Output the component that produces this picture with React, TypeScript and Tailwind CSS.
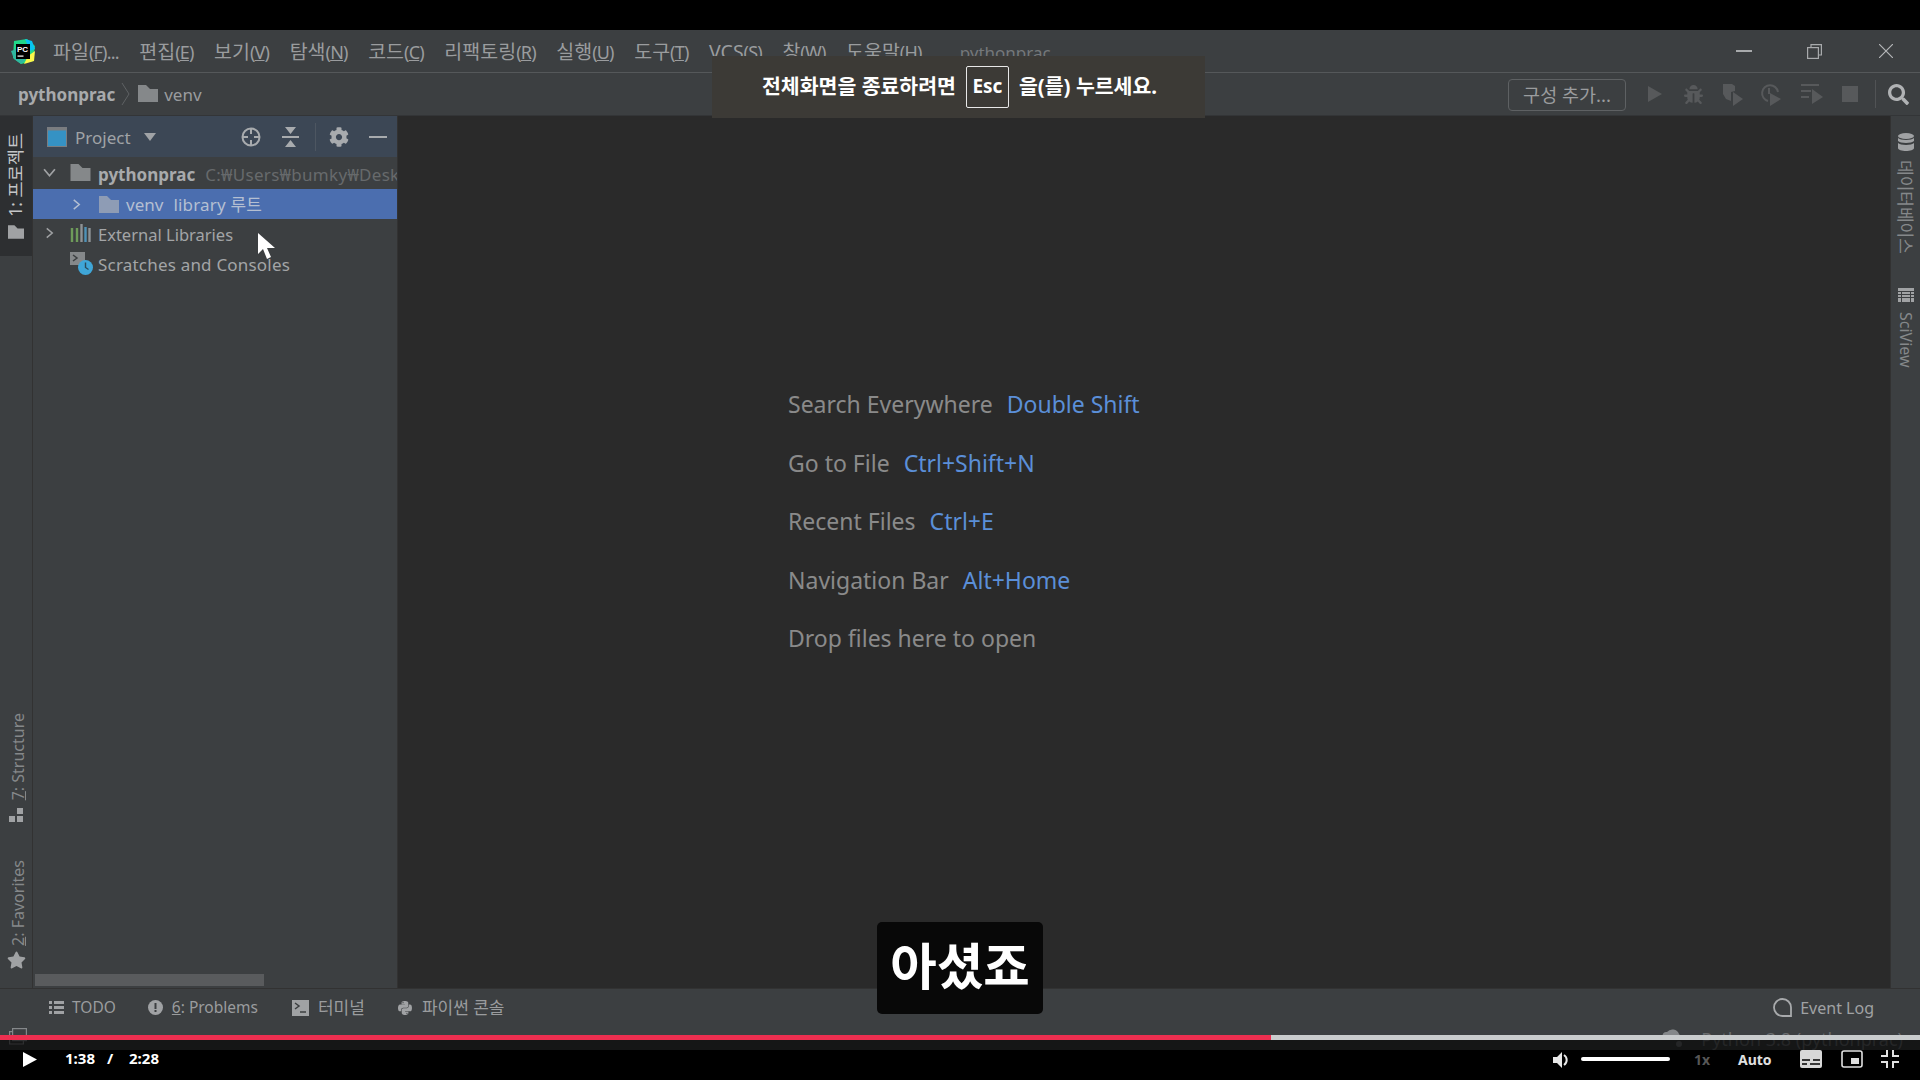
import { FaBug, FaCog, FaPython, FaSearch, FaStar } from 'react-icons/fa';

const menus = [
  ['파일', 'F', '...'],
  ['편집', 'E', ''],
  ['보기', 'V', ''],
  ['탐색', 'N', ''],
  ['코드', 'C', ''],
  ['리팩토링', 'R', ''],
  ['실행', 'U', ''],
  ['도구', 'T', ''],
  ['VCS', 'S', ''],
  ['창', 'W', ''],
  ['도움말', 'H', ''],
];

const hints = [
  ['Search Everywhere', 'Double Shift'],
  ['Go to File', 'Ctrl+Shift+N'],
  ['Recent Files', 'Ctrl+E'],
  ['Navigation Bar', 'Alt+Home'],
  ['Drop files here to open', ''],
];

function Folder({ className }: { className: string }) {
  return (
    <svg viewBox="0 0 20 17" className={className} fill="currentColor">
      <path d="M0 0h8l4 4h8v13H0z" />
    </svg>
  );
}

function Chevron({ down, className }: { down?: boolean; className: string }) {
  return (
    <svg viewBox="0 0 12 12" className={className} fill="none" stroke="currentColor" strokeWidth="1.6">
      <path d={down ? 'M1 3l5 6 5-6' : 'M3 1l6 5-6 5'} />
    </svg>
  );
}

function Logo() {
  return (
    <svg viewBox="0 0 24 25" className="w-[24px] h-[25px]">
      <path d="M3 2l13-2 8 7-2 15-12 3-8-6z" fill="#21d789" />
      <path d="M14 0l7 2 3 8-5 2z" fill="#07c3f2" />
      <path d="M24 12l-1 10-10 3 4-8z" fill="#fcf84a" />
      <path d="M0 12l3 8 7 5 5-5-9-10z" fill="#2fb8a0" />
      <rect x="5" y="5" width="14" height="15" fill="#000" />
      <text x="6" y="13" fontSize="8" fontWeight="700" fill="#fff" fontFamily="Liberation Sans, sans-serif">PC</text>
      <rect x="6.5" y="16.5" width="6" height="1.2" fill="#fff" />
    </svg>
  );
}

function Run() {
  return (
    <svg viewBox="0 0 14 16" className="w-[14px] h-[16px]" fill="currentColor">
      <path d="M0 0l14 8-14 8z" />
    </svg>
  );
}

function Coverage() {
  return (
    <svg viewBox="0 0 22 24" className="w-[22px] h-[24px]" fill="currentColor">
      <path d="M1 2h9l3 2v5l-4 1v9L4 17 1 12z" />
      <path d="M11 10l10 7-10 7z" />
    </svg>
  );
}

function Profile() {
  return (
    <svg viewBox="0 0 22 24" className="-ml-[3px] w-[22px] h-[24px]" fill="none" stroke="currentColor" strokeWidth="2">
      <path d="M8 19a8 8 0 1 1 10-9" />
      <path d="M9 6v6" />
      <path d="M10 11l11 6-11 7z" fill="currentColor" stroke="none" />
    </svg>
  );
}

function Concurrency() {
  return (
    <svg viewBox="0 0 22 20" className="w-[22px] h-[20px]" fill="currentColor">
      <path d="M0 0h18v2H0zM0 6h10v2H0zM0 12h8v2H0z" />
      <path d="M11 5l11 8-11 7z" />
    </svg>
  );
}

function Tree() {
  return (
    <div className="flex-1 text-[17px] text-[#a3a5a7]">
      <div className="h-[32px] flex items-center pt-[4px] overflow-hidden">
        <Chevron down className="shrink-0 w-[13px] h-[13px] ml-[10px] -mt-[6px] text-[#a0a2a4]" />
        <Folder className="shrink-0 w-[21px] h-[17px] ml-[14px] -mt-[6px] text-[#85888a]" />
        <span className="ml-[7px] font-bold text-[#a8aaac]">pythonprac</span>
        <span className="ml-[10px] text-[#676a6c] whitespace-nowrap tracking-[0.3px]">C:₩Users₩bumky₩Desktop₩pythonprac</span>
      </div>
      <div className="h-[30px] flex items-center bg-[#4b6eaf] text-[#b4bfd2]">
        <Chevron className="shrink-0 w-[11px] h-[13px] ml-[38px] text-[#b4bfd2]" />
        <Folder className="shrink-0 w-[20px] h-[17px] ml-[17px] text-[#8e9cb5]" />
        <span className="ml-[7px] pt-[1px]">venv</span>
        <span className="ml-[10px] pt-[1px] tracking-[0.2px]">library 루트</span>
      </div>
      <div className="h-[30px] flex items-center">
        <Chevron className="shrink-0 w-[11px] h-[14px] ml-[11px] -mt-[2px] text-[#a0a2a4]" />
        <svg viewBox="0 0 21 18" className="shrink-0 w-[21px] h-[18px] ml-[15px] -mt-[3px]" fill="none" strokeWidth="2.4">
          <path d="M2 4v14M7 4v14" stroke="#6e9b5a" />
          <path d="M11.5 0v18" stroke="#8f9396" />
          <path d="M15.5 3v15" stroke="#4f92b8" />
          <path d="M19.5 4v14" stroke="#8f9396" />
        </svg>
        <span className="ml-[7px] pt-[2px] text-[16.500px]">External Libraries</span>
      </div>
      <div className="h-[30px] flex items-center">
        <svg viewBox="0 0 23 23" className="shrink-0 w-[23px] h-[23px] ml-[37px] -mt-[1px]">
          <rect x="0" y="0" width="15" height="13" fill="#85888a" />
          <path d="M3 3l4 3-4 3" fill="none" stroke="#3c3f41" strokeWidth="1.5" />
          <circle cx="15.5" cy="15.5" r="7.5" fill="#3fa6d8" />
          <path d="M15.5 10.5v5l3 2" fill="none" stroke="#2b4a5a" strokeWidth="1.4" />
        </svg>
        <span className="ml-[5px] pt-[2px] tracking-[0.2px]">Scratches and Consoles</span>
      </div>
    </div>
  );
}

function Cursor() {
  return (
    <svg viewBox="0 0 17 26" className="absolute left-[258px] top-[233px] w-[17px] h-[26px]">
      <path d="M0 0v21l5-5 4 10 4-2-4-9h8z" fill="#fff" />
    </svg>
  );
}

function PlayerBar() {
  return (
    <div className="absolute left-0 right-0 bottom-0 h-[45px] text-white">
      <div className="h-[5px] flex">
        <div className="w-[1271px] bg-[#ed2f50]" />
        <div className="flex-1 bg-[#c9cccd]" />
      </div>
      <div className="h-[10px] bg-black/65" />
      <div className="h-[30px] bg-black" />
      <div className="absolute left-0 right-0 top-0 bottom-0 flex items-start pt-[13px]">
        <svg viewBox="0 0 14 15" className="ml-[23px] mt-[4px] w-[14px] h-[15px]" fill="#fff">
          <path d="M0 0l14 7.5L0 15z" />
        </svg>
        <span className="ml-[28px] w-[42px] text-[15px] font-bold leading-[20px]">1:38</span>
        <span className="text-[15px] font-bold leading-[20px] w-[22px]">/</span>
        <span className="text-[15px] font-bold leading-[20px]">2:28</span>
        <div className="flex-1" />
        <svg viewBox="0 0 18 16" className="mt-[4px] w-[18px] h-[16px]" fill="#e8e8e8">
          <path d="M0 5h4l5-5v16l-5-5H0z" />
          <path d="M11 3a6 6 0 0 1 0 10" fill="none" stroke="#e8e8e8" strokeWidth="2" />
        </svg>
        <div className="ml-[10px] mt-[9px] w-[89px] h-[4px] rounded-full bg-white" />
        <span className="ml-[24px] mt-[2px] w-[44px] text-[14px] font-bold text-[#575757] leading-[20px]">1x</span>
        <span className="mt-[2px] w-[62px] text-[14px] font-bold text-[#e0e0e0] leading-[20px]">Auto</span>
        <svg viewBox="0 0 22 18" className="mt-[2px] w-[22px] h-[18px]">
          <rect width="22" height="18" rx="2" fill="#d8d8d8" />
          <path d="M2 10h8M13 10h7M2 14h5M10 14h10" stroke="#000" strokeWidth="1.5" />
        </svg>
        <svg viewBox="0 0 22 18" className="ml-[19px] mt-[2px] w-[22px] h-[18px]">
          <rect x="1" y="1" width="20" height="16" rx="2" fill="none" stroke="#e0e0e0" strokeWidth="1.6" />
          <rect x="10" y="8" width="8" height="6" fill="#e0e0e0" />
        </svg>
        <svg viewBox="0 0 18 18" className="ml-[18px] mr-[21px] mt-[2px] w-[18px] h-[18px]" fill="none" stroke="#e0e0e0" strokeWidth="2">
          <path d="M6 0v6H0M12 0v6h6M6 18v-6H0M12 18v-6h6" />
        </svg>
      </div>
    </div>
  );
}

export default function App() {
  return (
    <div className="relative w-[1920px] h-[1080px] overflow-hidden bg-black flex flex-col font-['Noto_Sans','Noto_Sans_CJK_KR',sans-serif] text-[#9a9c9e]">
      <div className="h-[30px] shrink-0 bg-black" />

      {/* Menu bar */}
      <div className="h-[43px] shrink-0 bg-[#3c3f41] border-b border-[#55585a] flex items-center pl-[11px] text-[19.500px] leading-none">
        <Logo />
        <div className="ml-[18px] pt-[2px] flex items-center gap-[20.500px]">
          {menus.map(([label, key, tail]) => (
            <span key={label} className="whitespace-nowrap">
              {label}
              <span className="text-[18px] tracking-[-0.8px]">
                (<span className="underline">{key}</span>){tail}
              </span>
            </span>
          ))}
        </div>
        <span className="ml-[38px] pt-[2px] text-[#75787a] text-[17px]">pythonprac</span>
        <div className="flex-1" />
        <div className="w-[16px] h-[1.5px] bg-[#a8aaac]" />
        <svg viewBox="0 0 15 15" className="ml-[55px] w-[15px] h-[15px]" fill="none" stroke="#a8aaac" strokeWidth="1.2">
          <rect x="0.6" y="3.6" width="10.8" height="10.8" />
          <path d="M4 3.5V.6h10.4V11H11.5" />
        </svg>
        <svg viewBox="0 0 14 14" className="ml-[57px] mr-[27px] w-[14px] h-[14px]" fill="none" stroke="#b4b6b8" strokeWidth="1.2">
          <path d="M0 0l14 14M14 0L0 14" />
        </svg>
      </div>

      {/* Navigation bar */}
      <div className="h-[43px] shrink-0 bg-[#3c3f41] border-b border-[#333537] flex items-center pl-[18px] text-[17px]">
        <span className="font-bold text-[#a8aaac] pt-[2px]">pythonprac</span>
        <svg viewBox="0 0 9 22" className="ml-[6px] w-[9px] h-[22px]" fill="none" stroke="#5f6264">
          <path d="M1 0l7 11-7 11" />
        </svg>
        <Folder className="ml-[8px] -mt-[2px] w-[20px] h-[17px] text-[#85888a]" />
        <span className="ml-[6px] pt-[2px] text-[#9a9c9e]">venv</span>
        <div className="flex-1" />
        <div className="mt-[2px] w-[118px] h-[32px] border border-[#5e6163] rounded-[4px] flex items-center justify-center text-[18.500px]">
          구성 추가...
        </div>
        <div className="ml-[22px] flex items-center gap-[19px] text-[#57595b]">
          <Run />
          <FaBug className="ml-[3px] w-[19px] h-[19px]" />
          <Coverage />
          <Profile />
          <Concurrency />
          <div className="w-[16px] h-[16px] bg-[#57595b]" />
        </div>
        <div className="ml-[17px] w-px h-[28px] bg-[#515355]" />
        <FaSearch className="ml-[12px] mr-[11px] w-[21px] h-[21px] text-[#b0b2b4]" />
      </div>

      {/* Main area */}
      <div className="h-[872px] shrink-0 flex">
        <div className="w-[33px] shrink-0 bg-[#3c3f41] border-r border-[#323232] flex flex-col justify-between text-[16px] leading-none">
          <div className="h-[140px] bg-[#2d2f31] flex flex-col items-center pt-[17px] text-[#c4c6c8]">
            <span className="text-[17.500px] [writing-mode:vertical-rl] [text-orientation:sideways] rotate-180 whitespace-nowrap">1: 프로젝트</span>
            <Folder className="mt-[8px] w-[16px] h-[14px] text-[#a0a2a4]" />
          </div>
          <div className="flex flex-col items-center pb-[19px] text-[#85888a]">
            <span className="ml-[4px] [writing-mode:vertical-rl] [text-orientation:sideways] rotate-180 whitespace-nowrap"><span className="underline">7</span>: Structure</span>
            <svg viewBox="0 0 14 14" className="mt-[8px] w-[14px] h-[14px]" fill="#a0a2a4">
              <path d="M8 0h6v6H8zM0 8h6v6H0zM8 8h6v6H8z" />
            </svg>
            <span className="ml-[4px] mt-[38px] [writing-mode:vertical-rl] [text-orientation:sideways] rotate-180 whitespace-nowrap"><span className="underline">2</span>: Favorites</span>
            <FaStar className="mt-[5px] w-[19px] h-[18px] text-[#a0a2a4]" />
          </div>
        </div>

        <div className="w-[365px] shrink-0 bg-[#3c3f41] border-r border-[#323232] flex flex-col overflow-hidden">
          <div className="h-[41px] shrink-0 bg-[#3c4755] flex items-center pl-[14px] text-[#a0a3a6]">
            <svg viewBox="0 0 20 20" className="w-[20px] h-[20px]">
              <rect x="0.5" y="0.5" width="19" height="19" fill="#3592c4" stroke="#7a7d80" />
              <rect x="0.5" y="0.5" width="19" height="3" fill="#7a7d80" />
            </svg>
            <span className="ml-[8px] pt-[3px] text-[17px]">Project</span>
            <svg viewBox="0 0 12 8" className="ml-[13px] w-[12px] h-[8px]" fill="#a0a3a6">
              <path d="M0 0h12L6 8z" />
            </svg>
            <svg viewBox="0 0 20 20" className="ml-[85px] w-[20px] h-[20px]" fill="none" stroke="#a8abae" strokeWidth="2">
              <circle cx="10" cy="10" r="8.5" />
              <path d="M10 1v6M10 13v6M1 10h6M13 10h6" />
            </svg>
            <svg viewBox="0 0 17 20" className="ml-[21px] w-[17px] h-[20px]" fill="#a8abae">
              <path d="M0 9h17v2H0zM3 0h11L8.5 7zM3 20h11l-5.500-7z" />
            </svg>
            <div className="ml-[16px] w-px h-[28px] bg-[#4d5661]" />
            <FaCog className="ml-[13px] w-[20px] h-[20px] text-[#a8abae]" />
            <div className="ml-[20px] w-[18px] h-[2px] bg-[#a8abae]" />
          </div>
          <Tree />
          <div className="mx-[2px] mb-[2px] w-[229px] h-[12px] bg-[#595b5d]" />
        </div>

        <div className="flex-1 bg-[#2a2a2a] pl-[390px] pt-[273px] text-[23px] leading-[30px]">
          {hints.map(([label, keys]) => (
            <div key={label} className="h-[58.500px] text-[#8a8a8a] whitespace-nowrap">
              {label}
              {keys && <span className="ml-[14px] text-[#5b8fd8]">{keys}</span>}
            </div>
          ))}
        </div>

        <div className="w-[30px] shrink-0 bg-[#3c3f41] border-l border-[#323232] flex flex-col items-center pt-[17px] text-[16px] leading-none text-[#85888a]">
          <svg viewBox="0 0 16 18" className="w-[16px] h-[18px]" fill="#a0a2a4">
            <ellipse cx="8" cy="3" rx="8" ry="3" />
            <path d="M0 5c2 2.500 14 2.500 16 0v3c-2 2.500-14 2.500-16 0zM0 10c2 2.500 14 2.500 16 0v5c0 4-16 4-16 0z" />
          </svg>
          <span className="mt-[9px] text-[17px] [writing-mode:vertical-rl] [text-orientation:sideways] whitespace-nowrap">데이터베이스</span>
          <svg viewBox="0 0 16 14" className="mt-[34px] w-[16px] h-[14px]" fill="#a0a2a4">
            <path d="M0 0h16v3H0zM0 4h3v2H0zM4 4h8v2H4zM13 4h3v2h-3zM0 7h3v2H0zM4 7h8v2H4zM13 7h3v2h-3zM0 10h3v4H0zM4 10h8v4H4zM13 10h3v4h-3z" />
          </svg>
          <span className="mt-[10px] [writing-mode:vertical-rl] [text-orientation:sideways] whitespace-nowrap">SciView</span>
        </div>
      </div>

      {/* Tool windows bar */}
      <div className="h-[42px] shrink-0 bg-[#3c3f41] border-t border-[#323232] flex items-center pl-[49px] pb-[4px] text-[15.500px] text-[#9a9c9e]">
        <svg viewBox="0 0 15 13" className="w-[15px] h-[13px]" fill="#a0a2a4">
          <path d="M0 0h3v3H0zM5 0h10v3H5zM0 5h3v3H0zM5 5h10v3H5zM0 10h3v3H0zM5 10h10v3H5z" />
        </svg>
        <span className="ml-[8px]">TODO</span>
        <svg viewBox="0 0 15 15" className="ml-[32px] w-[15px] h-[15px]">
          <circle cx="7.500" cy="7.500" r="7.500" fill="#a0a2a4" />
          <path d="M6.500 3h2v6h-2zM6.500 10h2v2h-2z" fill="#3c3f41" />
        </svg>
        <span className="ml-[9px]"><span className="underline">6</span>: Problems</span>
        <svg viewBox="0 0 17 16" className="ml-[34px] w-[17px] h-[16px]">
          <rect width="17" height="16" fill="#a0a2a4" />
          <path d="M3 3l4 3-4 3" fill="none" stroke="#3c3f41" strokeWidth="1.5" />
          <path d="M8 12h6" stroke="#3c3f41" strokeWidth="1.5" />
        </svg>
        <span className="ml-[9px] text-[17px]">터미널</span>
        <FaPython className="ml-[32px] w-[16px] h-[16px] text-[#a0a2a4]" />
        <span className="ml-[9px] text-[17px]">파이썬 콘솔</span>
        <div className="flex-1" />
        <svg viewBox="0 0 19 19" className="w-[19px] h-[19px]" fill="none" stroke="#a8aaac" strokeWidth="1.800">
          <path d="M18 18H9.500a8.500 8.500 0 1 1 8.500-8.500z" />
        </svg>
        <span className="ml-[8px] mr-[46px] text-[16px] text-[#a0a2a4]">Event Log</span>
      </div>

      {/* Status bar, mostly hidden under the player controls */}
      <div className="flex-1 bg-[#3c3f41] flex items-start pl-[9px] text-[#6a6d6f] text-[18px] leading-none">
        <svg viewBox="0 0 18 17" className="w-[18px] h-[17px] -mt-[2px]" fill="none" stroke="#85888a" strokeWidth="1.2">
          <rect x="3.600" y="0.600" width="13.800" height="12" />
          <path d="M3.600 3.600H.6V16h13.800v-3.400" />
        </svg>
        <div className="flex-1" />
        <svg viewBox="0 0 22 21" className="w-[22px] h-[21px] -mt-[3px]" fill="#85888a">
          <path d="M4 13a4 4 0 0 1 1-8 7 7 0 0 1 12 2 4 4 0 0 1 0 6z" />
          <circle cx="17" cy="17" r="3" fill="#6a6d6f" />
        </svg>
        <span className="ml-[17px] mr-[17px] whitespace-nowrap">Python 3.8 (pythonprac)</span>
      </div>

      <Cursor />

      {/* Browser fullscreen notice */}
      <div className="absolute left-[712px] top-[56px] w-[493px] h-[62px] bg-[#3c3a36] flex items-center pl-[50px] pb-[1px] text-white font-bold text-[20.500px]">
        <span className="whitespace-nowrap">전체화면을 종료하려면</span>
        <span className="ml-[10px] w-[43px] h-[42px] border-[1.500px] border-[#e8e8e8] rounded-[2px] flex items-center justify-center text-[19px]">Esc</span>
        <span className="ml-[10px] whitespace-nowrap">을(를) 누르세요.</span>
      </div>

      {/* Subtitle */}
      <div className="absolute left-[877px] top-[922px] w-[166px] h-[92px] rounded-[5px] bg-[#080808] flex items-center justify-center pb-[3px] text-white font-bold text-[50.500px] leading-none">
        아셨죠
      </div>

      <PlayerBar />
    </div>
  );
}
